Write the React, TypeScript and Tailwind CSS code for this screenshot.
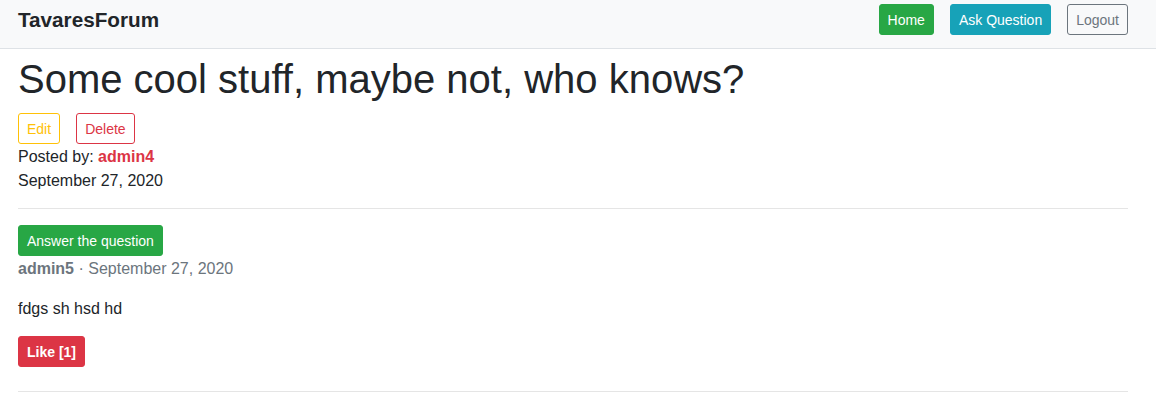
import React from 'react';

const btn = 'inline-block border rounded-[3px] px-2 pt-[5px] pb-[3px] text-sm leading-[21px]';

const App: React.FC = () => {
  return (
    <div className="min-h-[416px] bg-white text-[#212529] font-['Liberation_Sans',Arial,sans-serif]">
      <nav className="bg-[#f8f9fa] border-b border-[#dee2e6] h-[49px] pt-1 pl-[18px] pr-[28px]">
        <div className="flex items-center justify-between h-[31px]">
          <a className="text-[20.7px] font-bold leading-[30px]">TavaresForum</a>
          <div className="flex gap-4">
            <a className={`${btn} bg-[#28a745] border-[#28a745] text-white`}>Home</a>
            <a className={`${btn} bg-[#17a2b8] border-[#17a2b8] text-white`}>Ask Question</a>
            <a className={`${btn} border-[#6c757d] text-[#6c757d]`}>Logout</a>
          </div>
        </div>
      </nav>

      <main className="ml-[18px] mr-[28px]">
        <h1 className="text-[40px] leading-[48px] mt-[6px] mb-[10px]">Some cool stuff, maybe not, who knows?</h1>
        <div className="flex gap-4">
          <a className={`${btn} border-[#ffc107] text-[#ffc107]`}>Edit</a>
          <a className={`${btn} border-[#dc3545] text-[#dc3545]`}>Delete</a>
        </div>
        <p className="leading-6 pt-px">
          Posted by: <span className="font-bold text-[#dc3545]">admin4</span>
        </p>
        <p className="leading-6">September 27, 2020</p>

        <hr className="mt-[15px] mb-4 border-0 border-t border-[#e5e5e5]" />

        <a className={`${btn} bg-[#28a745] border-[#28a745] text-white`}>Answer the question</a>
        <p className="leading-6 pt-px text-[#6c757d]">
          <span className="font-bold">admin5</span> · September 27, 2020
        </p>
        <p className="leading-6 mt-4 mb-[15px]">fdgs sh hsd hd</p>
        <a className={`${btn} bg-[#dc3545] border-[#dc3545] text-white font-bold`}>Like [1]</a>

        <hr className="mt-6 border-0 border-t border-[#e5e5e5]" />
      </main>
    </div>
  );
};

export default App;
